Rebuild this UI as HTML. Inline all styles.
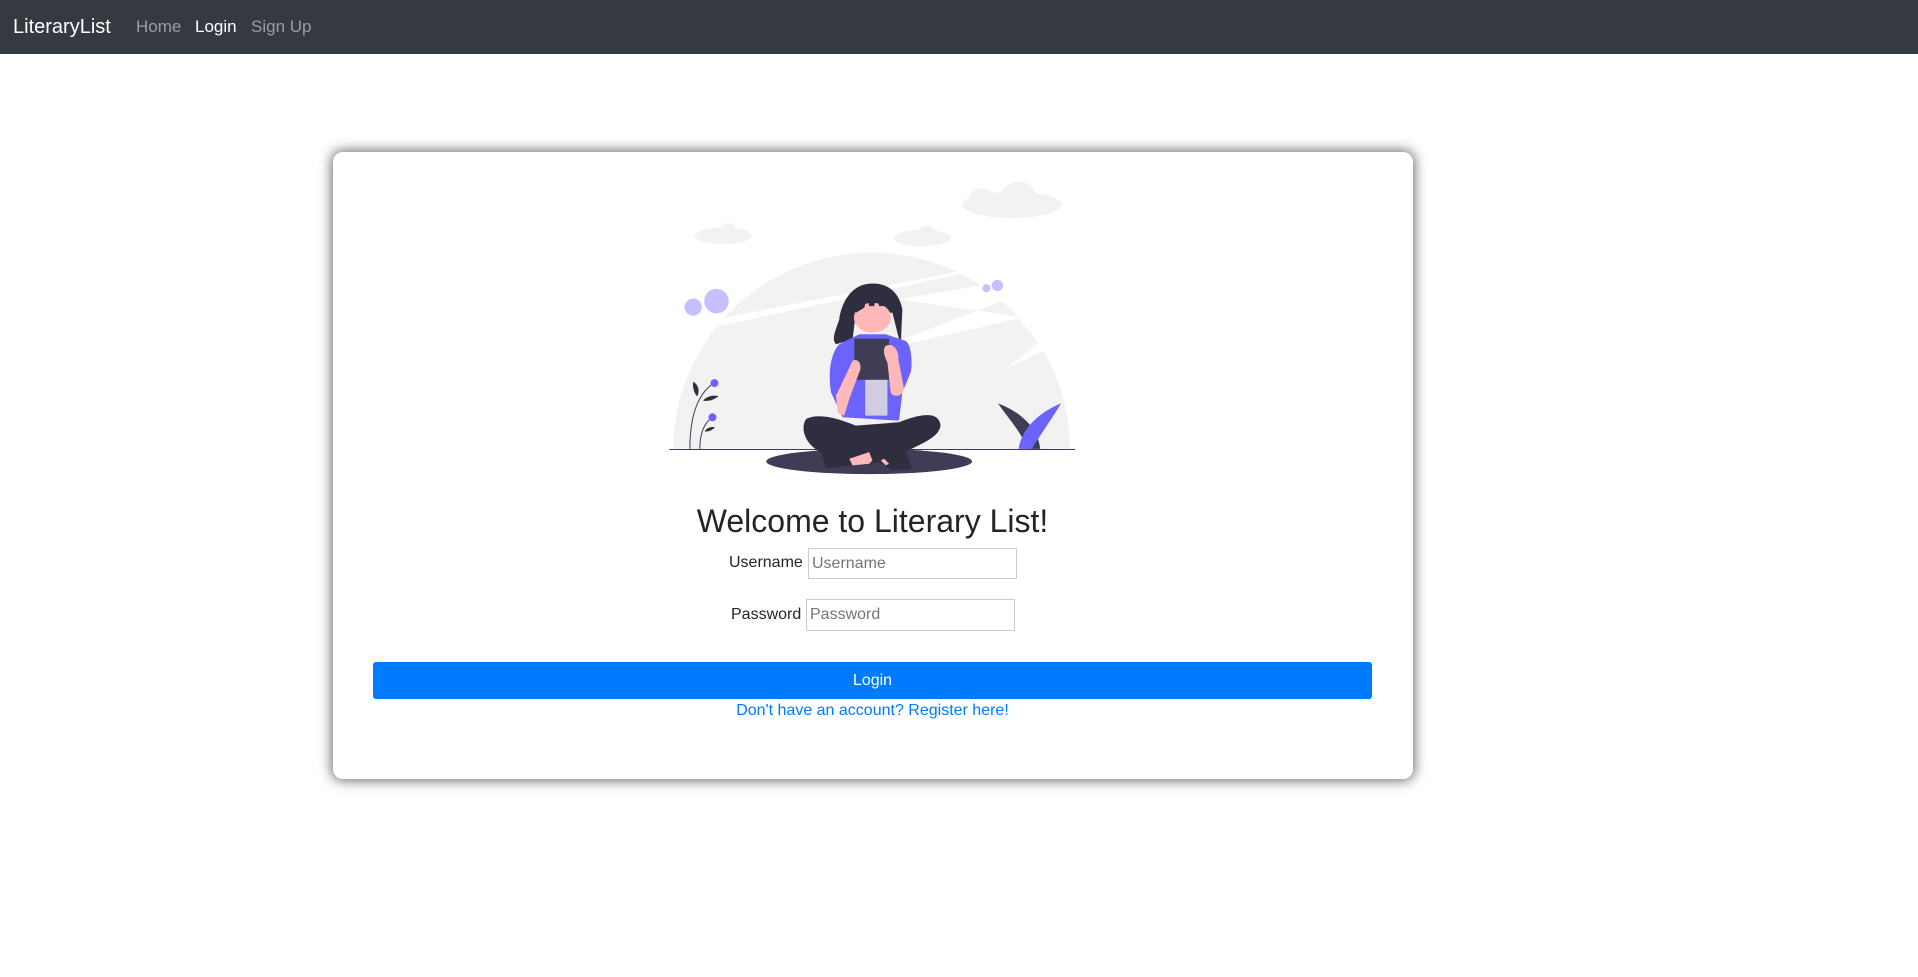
<!DOCTYPE html>
<html><head><meta charset="utf-8">
<style>
*{box-sizing:border-box;margin:0;padding:0}
body{width:1918px;height:977px;background:#fff;font-family:"Liberation Sans",sans-serif;position:relative;overflow:hidden;color:#212529}
.nav{position:absolute;left:0;top:0;width:1918px;height:54px;background:#343a40}
.nav span{position:absolute;top:17px;font-size:17px;color:rgba(255,255,255,.5)}
.brand{left:13px;top:16px!important;font-size:20px!important;color:#fff!important}
.card{position:absolute;left:333px;top:152px;width:1080px;height:627px;border-radius:10px;background:#fff;box-shadow:0 0 12px 2px rgba(0,0,0,.55)}
.abs{position:absolute}
h1{position:absolute;left:0;width:1745px;text-align:center;top:503px;font-size:32px;font-weight:normal;color:#212529}
.lbl{position:absolute;font-size:16px;color:#212529}
.inp{position:absolute;border:1px solid #ccc;background:#fff;font-size:16px;color:#757575;padding:6px 3px}
.btn{position:absolute;left:373px;top:662px;width:999px;height:37px;background:#007bff;border-radius:3px;color:#fff;font-size:16px;text-align:center;line-height:37px}
.link{position:absolute;left:0;width:1745px;text-align:center;top:702px;font-size:16px;color:#007bff}
</style></head><body>
<div class="nav">
<span class="brand">LiteraryList</span>
<span style="left:136px">Home</span>
<span style="left:195px;color:#fff">Login</span>
<span style="left:251px">Sign Up</span>
</div>
<div class="card"></div>
<svg class="abs" style="left:640px;top:160px" width="460" height="330" viewBox="0 0 1385 994">
<g fill="#f2f2f2">
<ellipse cx="1120" cy="135" rx="150" ry="40"/><circle cx="1140" cy="120" r="55"/><circle cx="1030" cy="125" r="40"/>
<ellipse cx="250" cy="228" rx="85" ry="25"/><circle cx="265" cy="215" r="25"/>
<ellipse cx="850" cy="235" rx="85" ry="25"/><circle cx="865" cy="222" r="25"/>
<path d="M100 872 A597 592 0 0 1 1295 872 Z"/>
</g>
<g fill="#fff">
<polygon points="230,480 960,335 960,345 240,500"/>
<polygon points="780,420 1040,375 1090,425 790,540 800,555 1140,478 1200,550 1100,630 1215,575 1240,600 1240,560 1200,480"/>
</g>
<line x1="88" y1="872" x2="1310" y2="872" stroke="#3f3d56" stroke-width="3"/>
<ellipse cx="690" cy="908" rx="310" ry="38" fill="#3f3d56"/>
<g fill="#c5c0ff"><circle cx="160" cy="443" r="26"/><circle cx="230" cy="425" r="37"/><circle cx="1043" cy="386" r="12"/><circle cx="1076" cy="378" r="17"/></g>
<path d="M700 372 C630 372 605 440 600 480 C590 510 575 540 590 555 L640 540 L650 460 L760 460 L785 560 L790 450 C780 400 750 372 700 372Z" fill="#2f2e41"/>
<ellipse cx="700" cy="475" rx="56" ry="45" fill="#ffb8b8"/>
<path d="M645 440 C660 395 740 395 760 440 L720 440 L712 410 L705 440 L690 440 L685 412 L675 445 L650 460Z" fill="#2f2e41"/>
<path d="M600 555 L660 525 L740 525 L800 545 C820 560 820 620 815 640 L790 700 L780 785 L610 775 L575 700 C565 640 575 580 600 555Z" fill="#6c63ff"/>
<rect x="678" y="655" width="67" height="115" fill="#d0cde1"/>
<rect x="645" y="538" width="105" height="124" fill="#3f3d56"/>
<path d="M640 605 C660 595 670 620 660 640 L630 720 L615 770 L595 760 L590 710 Z" fill="#ffb8b8"/>
<path d="M740 560 C760 550 780 570 778 600 L795 690 C790 715 760 715 755 700 L745 610 C735 590 730 570 740 560Z" fill="#ffb8b8"/>
<path d="M500 780 C540 760 600 780 650 800 L780 790 C830 770 900 750 905 800 C900 840 830 860 800 880 L820 930 L760 935 L720 910 L640 920 L560 930 L545 880 C500 860 480 810 500 780Z" fill="#2f2e41"/>
<path d="M630 900 L690 880 L700 905 L690 915 L640 920Z" fill="#ffb8b8"/>
<path d="M735 900 L750 915 L740 920 L725 905Z" fill="#ffb8b8"/>
<g stroke="#3f3d56" stroke-width="3" fill="none"><path d="M150 870 C150 760 180 700 222 672"/><path d="M180 870 C180 820 195 790 218 775"/></g>
<g fill="#2f2e41"><path d="M160 668 C180 680 178 700 172 712 C160 700 158 680 160 668Z"/><path d="M236 712 C220 705 195 715 190 725 C210 728 225 720 236 712Z"/><path d="M225 805 C210 802 198 810 195 818 C210 818 220 812 225 805Z"/></g>
<g fill="#6c63ff"><circle cx="224" cy="672" r="12"/><circle cx="218" cy="775" r="12"/></g>
<path d="M1078 733 C1150 760 1200 810 1205 870 L1165 870 C1150 820 1110 780 1078 733Z" fill="#3f3d56"/>
<path d="M1268 733 C1200 760 1150 810 1140 870 L1180 870 C1210 820 1240 780 1268 733Z" fill="#6c63ff"/>
</svg>
<h1>Welcome to Literary List!</h1>
<div class="lbl" style="left:729px;top:554px">Username</div>
<div class="inp" style="left:808px;top:548px;width:209px;height:31px">Username</div>
<div class="lbl" style="left:731px;top:606px">Password</div>
<div class="inp" style="left:806px;top:599px;width:209px;height:32px">Password</div>
<div class="btn">Login</div>
<div class="link">Don't have an account? Register here!</div>
</body></html>
